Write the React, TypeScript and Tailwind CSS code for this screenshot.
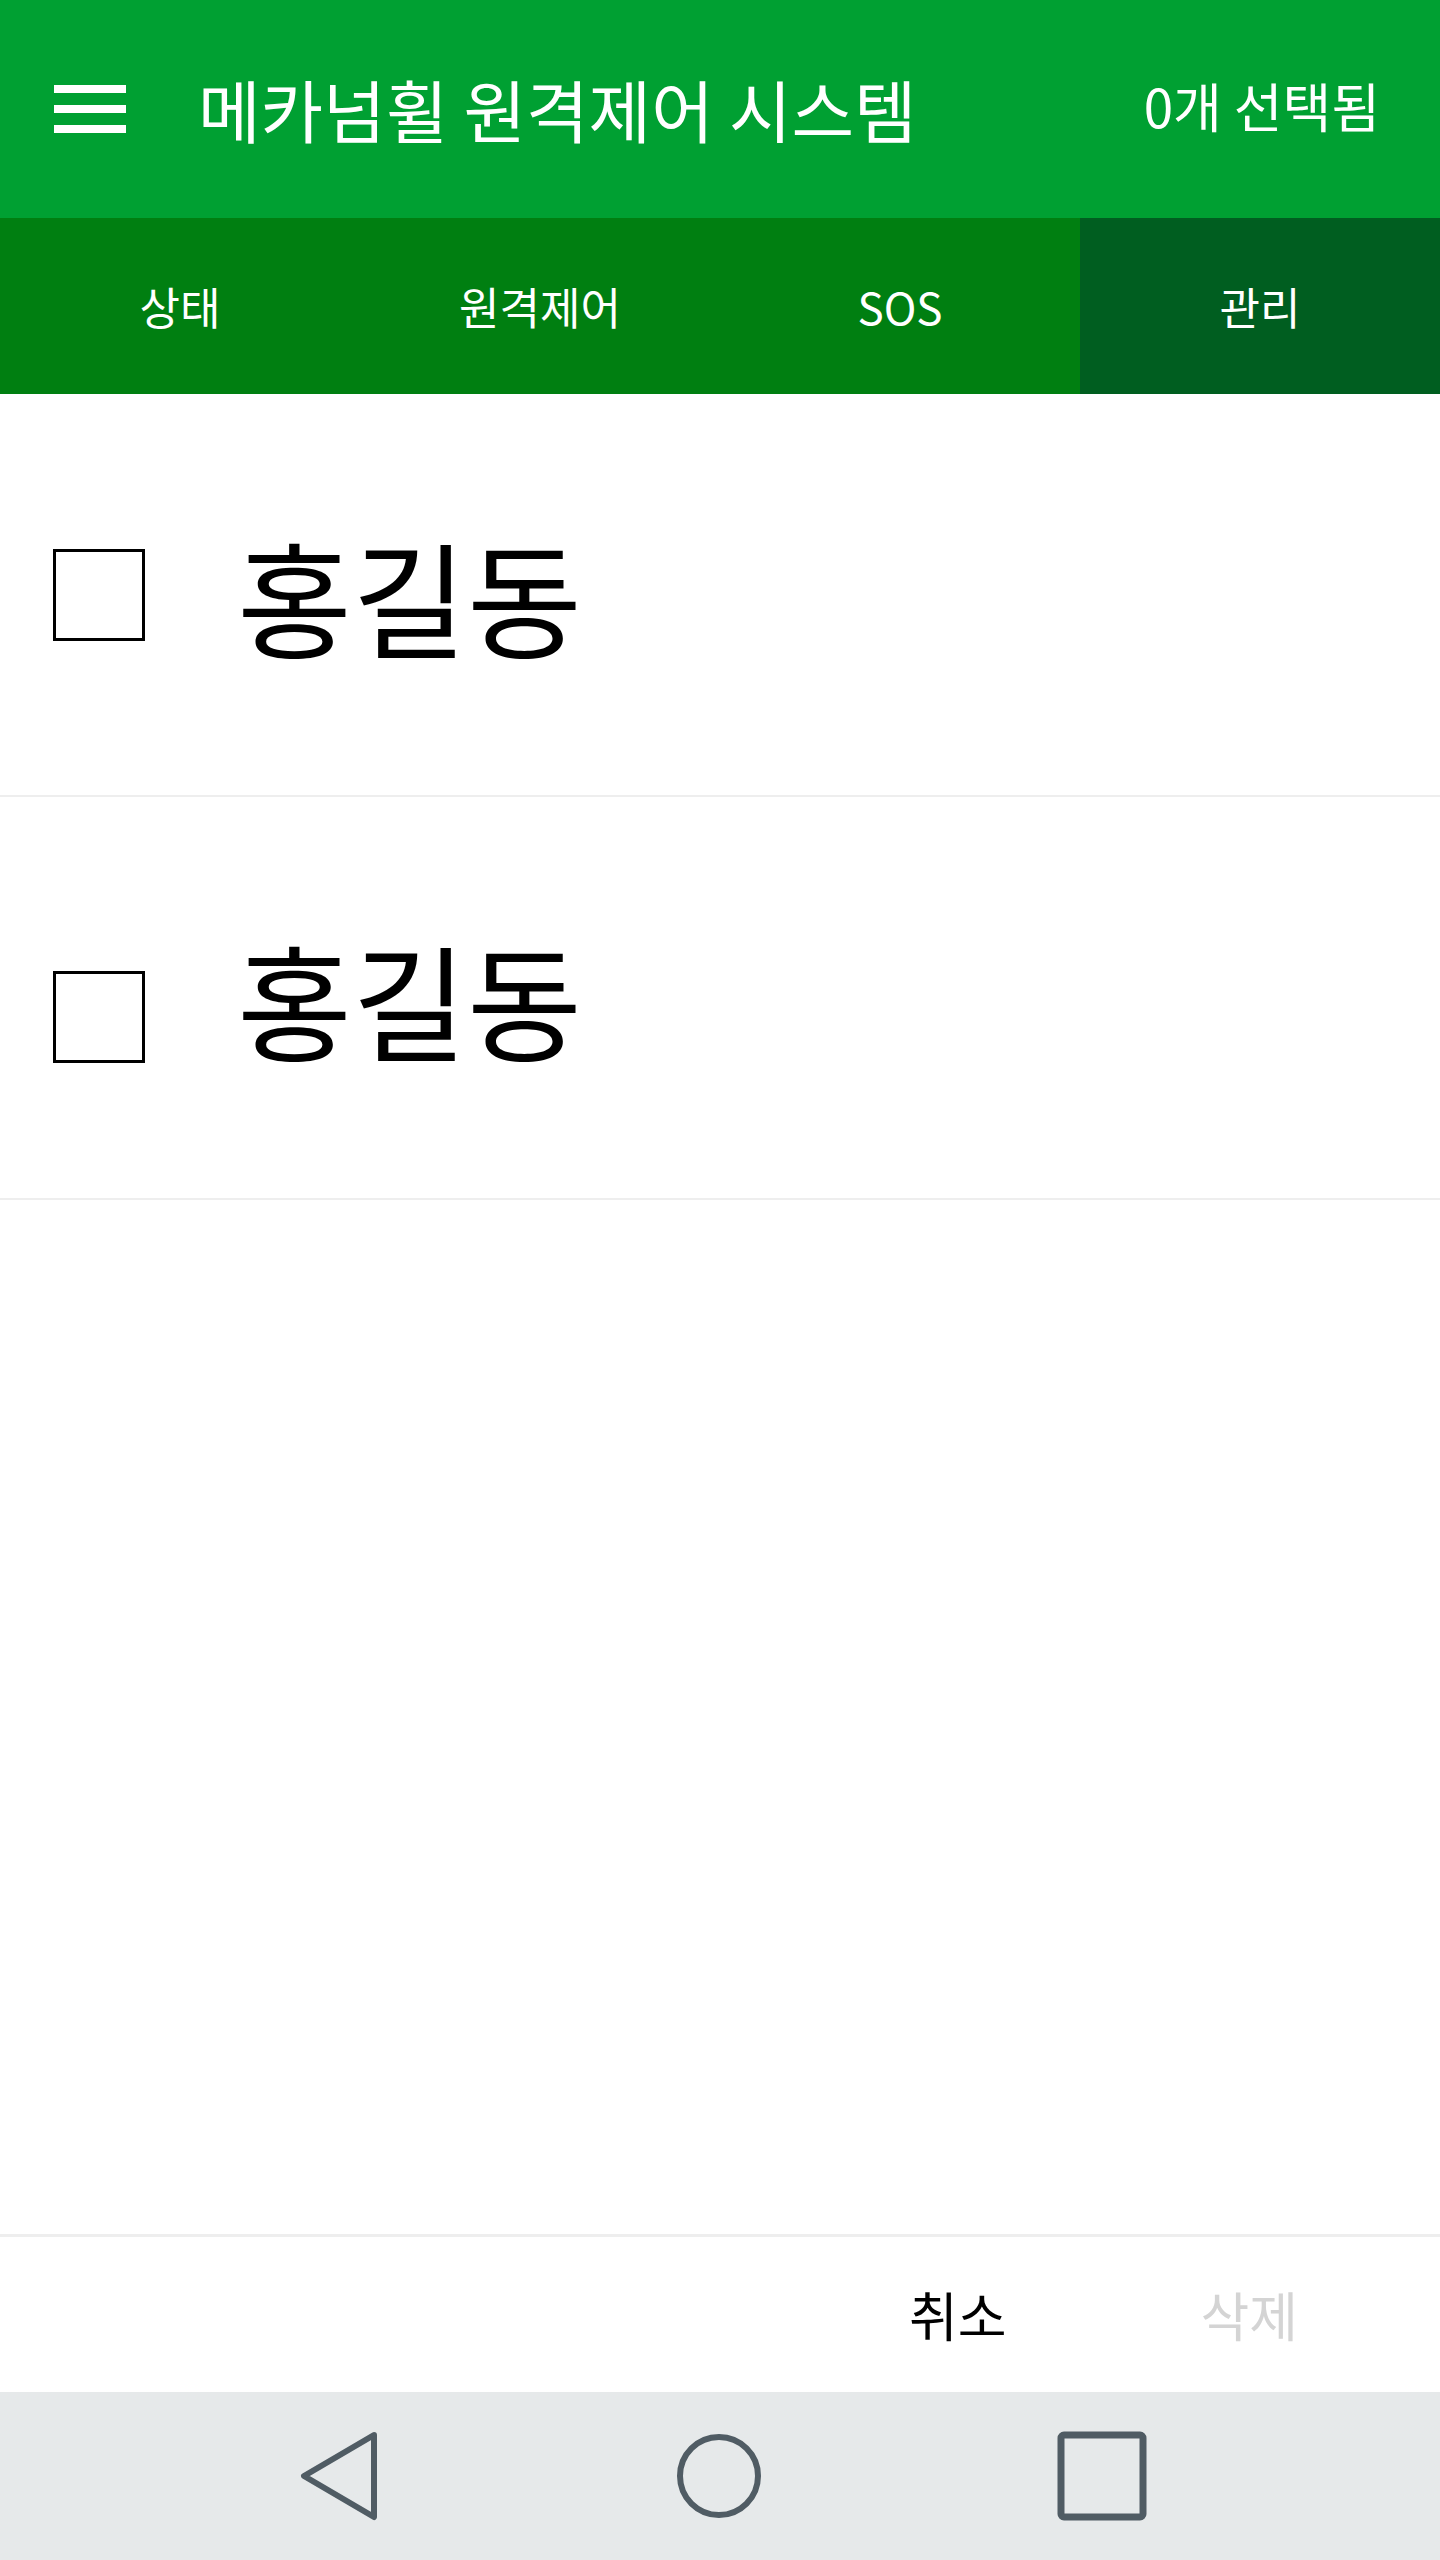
const tabs = ['상태', '원격제어', 'SOS', '관리'];
const users = [
  { id: 1, name: '홍길동', offset: 'mt-0' },
  { id: 2, name: '홍길동', offset: 'mt-[38px]' },
];

const Check = ({ className }: { className: string }) => (
  <div className={`w-[92px] h-[92px] border-[3px] border-black bg-white shrink-0 ${className}`}></div>
);

export default function App() {
  return (
    <div className="w-[1440px] h-[2560px] flex flex-col bg-white font-['Noto_Sans_CJK_KR','Noto_Sans',sans-serif]">
      {/* app bar */}
      <div className="h-[218px] bg-[#00a032] flex items-center text-white shrink-0">
        <div className="w-[72px] ml-[54px] flex flex-col gap-[12px]">
          <div className="h-[8px] bg-white"></div>
          <div className="h-[8px] bg-white"></div>
          <div className="h-[8px] bg-white"></div>
        </div>
        <h1 className="ml-[72px] text-[68px] leading-none">메카넘휠 원격제어 시스템</h1>
        <span className="ml-auto mr-[60px] mb-[8px] text-[53px] leading-none">0개 선택됨</span>
      </div>

      {/* tabs */}
      <div className="h-[176px] grid grid-cols-4 bg-[#007f11] text-white shrink-0">
        {tabs.map((t, i) => (
          <div key={t} className={`flex items-center justify-center ${i === 3 ? 'bg-[#005e20]' : ''}`}>
            <span className="text-[44px] leading-none">{t}</span>
          </div>
        ))}
      </div>

      {/* list */}
      {users.map((u) => (
        <div key={u.id} className="h-[403px] flex items-center border-b-2 border-[#eeeeee] shrink-0">
          <Check className={`ml-[53px] ${u.offset}`} />
          <span className="ml-[92px] text-[125px] leading-none text-black">{u.name}</span>
        </div>
      ))}

      <div className="flex-1"></div>

      {/* actions */}
      <div className="h-[158px] border-t-[3px] border-[#eeeeee] flex items-center justify-end pr-[142px] shrink-0">
        <button className="text-[53px] leading-none text-black">취소</button>
        <button className="ml-[194px] text-[53px] leading-none text-[#d4d4d4]">삭제</button>
      </div>

      {/* system nav */}
      <div className="h-[168px] bg-[#e6e9ea] flex items-center shrink-0">
        <svg className="ml-[298px]" width="82" height="90" viewBox="0 0 82 90">
          <path d="M76 4 L6 45 L76 86 Z" fill="none" stroke="#505c64" strokeWidth="6" strokeLinejoin="round" />
        </svg>
        <svg className="ml-[295px]" width="88" height="88" viewBox="0 0 88 88">
          <ellipse cx="44" cy="44" rx="39" ry="39" fill="none" stroke="#505c64" strokeWidth="6" />
        </svg>
        <svg className="ml-[294px]" width="90" height="90" viewBox="0 0 90 90">
          <rect x="4" y="4" width="82" height="82" rx="3" fill="none" stroke="#505c64" strokeWidth="7" />
        </svg>
      </div>
    </div>
  );
}
